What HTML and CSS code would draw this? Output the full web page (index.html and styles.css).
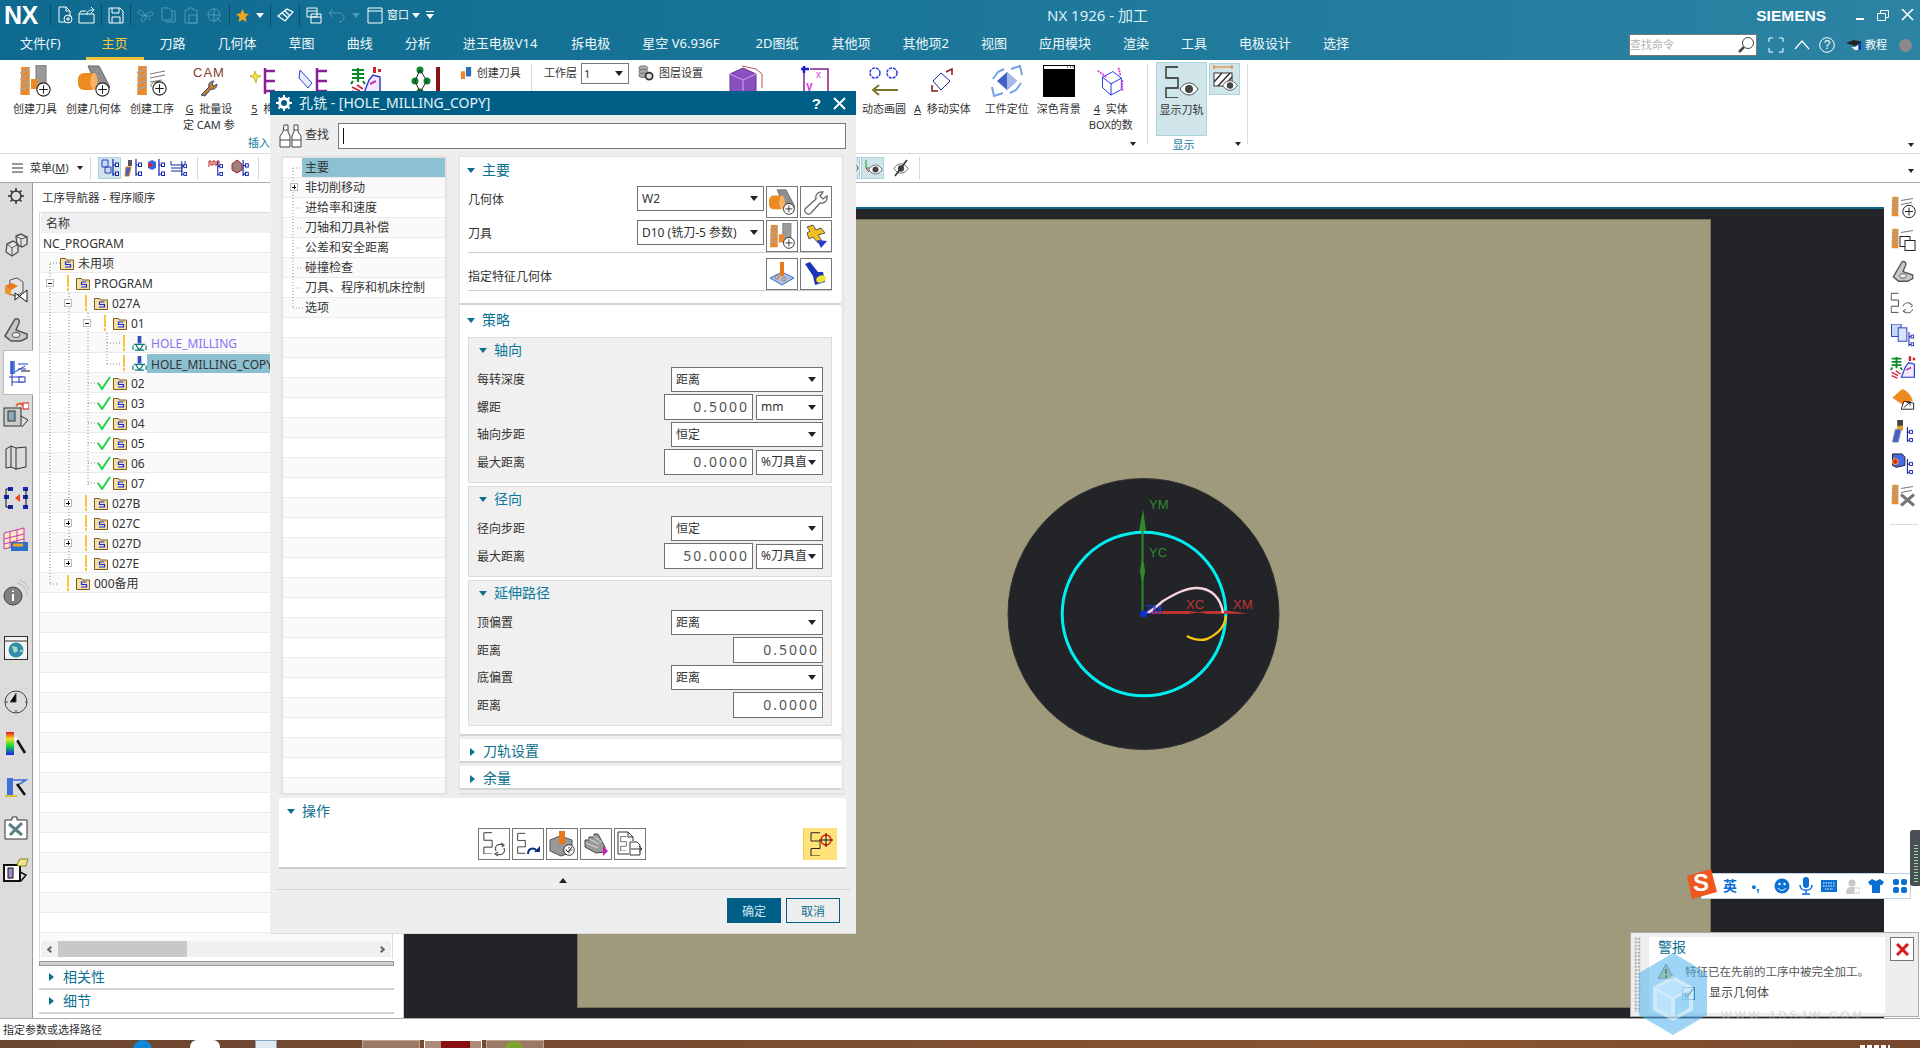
FILE: index.html
```html
<!DOCTYPE html>
<html lang="zh">
<head>
<meta charset="utf-8">
<title>NX 1926 - 加工</title>
<link rel="stylesheet" href="styles.css">
</head>
<body>
<svg class="defs" width="0" height="0">
<defs>
<symbol id="drill" viewBox="0 0 12 30"><path d="M2 0h9v30H1z" fill="#e98a2e"/><path d="M1 7l10-5M1 13l10-5M1 19l10-5M1 25l10-5" stroke="#a9a39a" stroke-width="2"/></symbol>
<symbol id="plus" viewBox="0 0 14 14"><circle cx="7" cy="7" r="6.2" fill="#fff" stroke="#222"/><path d="M7 3v8M3 7h8" stroke="#222"/></symbol>
<symbol id="c-tool" viewBox="0 0 32 32"><use href="#drill" x="0" y="2" width="12" height="28"/><path d="M17 0h10v22H17z" fill="#9a9a9a" stroke="#777"/><path d="M12 14h7v10h-7z" fill="#e98a2e"/><use href="#plus" x="17" y="17" width="15" height="15"/></symbol>
<symbol id="c-geom" viewBox="0 0 32 32"><path d="M10 1h11l11 21-9 9z" fill="#8f8f8f" stroke="#666"/><rect x="0" y="8" width="19" height="17" rx="6" fill="#ee8a22"/><ellipse cx="16" cy="16.500" rx="3.500" ry="8.500" fill="#f7b266"/><use href="#plus" x="17" y="17" width="15" height="15"/></symbol>
<symbol id="c-oper" viewBox="0 0 32 32"><use href="#drill" x="0" y="1" width="12" height="29"/><path d="M14 9l15-3M14 13l15-3M14 17l12-2M16 22c-3-2 0-5 8-6" stroke="#777" fill="none"/><use href="#plus" x="16" y="16" width="15" height="15"/></symbol>
<symbol id="cam" viewBox="0 0 32 32"><text x="0" y="12" class="svg-cam">CAM</text><path d="M8 30l8-8c-1-3 1-6 5-6l-2 3 2 2 3-2c0 4-3 6-6 5l-6 7z" fill="#c67d20" stroke="#234d9c"/></symbol>
<symbol id="star-e" viewBox="0 0 28 28"><path d="M6 4l1.500 4L12 9l-4 2-1 5-2-5-4-2 4-1z" fill="#f5e34a" stroke="#c8b830"/><path d="M16 1v26M16 4h10M16 14h10M16 24h10" stroke="#8c1f9c" stroke-width="2.500" fill="none"/></symbol>
<symbol id="hand-e" viewBox="0 0 30 28"><path d="M2 3l12 13-4 5-9-10z" fill="#e8eefc" stroke="#2b3fd0"/><path d="M19 1v26M19 4h10M19 14h10M19 24h10" stroke="#8c1f9c" stroke-width="2.500" fill="none"/></symbol>
<symbol id="green-hand" viewBox="0 0 32 28"><path d="M2 3h12M2 7h12M2 11h12M8 1v14M3 14l-2 3M13 14l2 3" stroke="#0a8a2a" stroke-width="2.200"/><path d="M23 0h3v6h-3zM28 2h3v3h-3z" fill="#cc2233"/><path d="M14 26l5-13 4-5 7 2v16z" fill="#f3e8ff" stroke="#2233cc" stroke-width="1.400"/><path d="M20 17l6-3" stroke="#c23ab0" stroke-width="2"/><path d="M2 20l8 4M2 24l7 3M7 18l6 4" stroke="#d02040" stroke-width="1.800"/></symbol>
<symbol id="chain" viewBox="0 0 30 28"><g fill="#0b8a2c"><circle cx="4" cy="14" r="3.500"/><circle cx="9" cy="3" r="3.500"/><circle cx="9" cy="25" r="3.500"/><circle cx="16" cy="14" r="3.500"/></g><path d="M4 14l5-11 7 11-7 11z" stroke="#222" fill="none"/><rect x="25" y="0" width="4" height="28" fill="#8a1414"/></symbol>
<symbol id="layer-gear" viewBox="0 0 18 18"><g fill="#aaa" stroke="#666"><ellipse cx="6" cy="3.500" rx="5" ry="2.500"/><ellipse cx="6" cy="7.500" rx="5" ry="2.500"/><ellipse cx="6" cy="11.500" rx="5" ry="2.500"/></g><circle cx="12.500" cy="12.500" r="4" fill="#ddd" stroke="#333" stroke-width="2"/></symbol>
<symbol id="small-tool" viewBox="0 0 14 14"><path d="M1 5h5v9H1z" fill="#e98a2e"/><path d="M7 0h6v11H7z" fill="#2d6bb8"/></symbol>
<symbol id="cube" viewBox="0 0 34 32"><path d="M1 9l13-6 13 6v20H1z" fill="#8b4fc0" stroke="#6a2f9c"/><path d="M1 9l13 6 13-6M14 15v16" stroke="#c9a8ea" fill="none"/><path d="M13 1l14 3 6 5v14" stroke="#b55" fill="none"/></symbol>
<symbol id="frame-y" viewBox="0 0 30 30"><path d="M4 4v24M10 3h18v23" stroke="#861e8e" stroke-width="1.500" fill="none"/><path d="M1 3h8M4 0v7" stroke="#1e1ec8" stroke-width="2.500"/><text x="6" y="24" class="svg-y">y</text><text x="16" y="12" class="svg-x">x</text></symbol>
<symbol id="circles-arrow" viewBox="0 0 30 30"><circle cx="6" cy="7" r="5" fill="none" stroke="#2b3fe0" stroke-dasharray="3 1" stroke-width="1.500"/><circle cx="23" cy="7" r="5" fill="none" stroke="#2b3fe0" stroke-dasharray="3 1" stroke-width="1.500"/><path d="M29 24H6" stroke="#78782a" stroke-width="2"/><path d="M10 19l-6 5 6 5" fill="none" stroke="#78782a" stroke-width="2"/></symbol>
<symbol id="move" viewBox="0 0 28 28"><path d="M13 6l9 8-9 9-8-9z" fill="#fff" stroke="#1a2a9c"/><path d="M18 5l6-3v6M10 24H4v-6" fill="none" stroke="#8a1a1a" stroke-width="1.500"/></symbol>
<symbol id="locate" viewBox="0 0 32 32"><path d="M16 7l10 9-10 9-10-9z" fill="#3f62c4"/><path d="M16 7l10 9-10 9z" fill="#aab9e8"/><path d="M20 4l9-3 2 9M12 28l-9 3-2-9M2 14l5-7 6-3M30 18l-5 7-6 3" fill="none" stroke="#78a2e8" stroke-width="2"/></symbol>
<symbol id="darkbg" viewBox="0 0 32 32"><rect width="32" height="32" fill="#000"/><rect x="1" y="1" width="30" height="3" fill="#fff"/><path d="M24 2h1M27 2h1M29.500 2h1" stroke="#000"/></symbol>
<symbol id="box-wire" viewBox="0 0 34 34"><path d="M8 13l11-6 9 7v12l-11 6-9-8z" fill="#fff" stroke="#1a2aee"/><path d="M8 13l9 7 11-6M17 20v12" stroke="#1a2aee" fill="none"/><path d="M3 6l9 7M25 3l2 8M29 16v11" stroke="#e23ad8" stroke-width="2" stroke-dasharray="2 1" fill="none"/></symbol>
<symbol id="path" viewBox="0 0 14 32"><path d="M13 1H1v11h12v10H1v10h12" fill="none" stroke="#222" stroke-width="1.300"/></symbol>
<symbol id="eye" viewBox="0 0 20 14"><path d="M1 7c5-8 13-8 18 0-5 8-13 8-18 0z" fill="#fff" stroke="#444"/><circle cx="10" cy="7" r="4" fill="#444"/></symbol>
<symbol id="hatch-eye" viewBox="0 0 26 30"><path d="M1 3h20M2 1v4M20 1v4" stroke="#e8781a"/><rect x="2" y="9" width="18" height="13" fill="#fff" stroke="#333"/><path d="M2 18l8-9M6 22l12-13M12 22l8-9" stroke="#333" stroke-width="1.500"/><use href="#eye" x="10" y="15" width="16" height="13"/></symbol>
<symbol id="tree-r" viewBox="0 0 8 18"><path d="M2 0v17M2 6h4M2 15h4" stroke="#12a" stroke-width="1.200"/><rect x="4.500" y="4" width="3" height="3.500" fill="#fff" stroke="#12a"/><rect x="4.500" y="13" width="3" height="3.500" fill="#fff" stroke="#12a"/></symbol>
<symbol id="mini-tree" viewBox="0 0 18 18"><path d="M1 1h6v7H1zM4 8h6v6H4z" fill="#c8d8f4" stroke="#2a3ac0"/><use href="#tree-r" x="10" y="0" width="8" height="18"/></symbol>
<symbol id="tb-tool" viewBox="0 0 18 18"><path d="M4 1h4v6H4z" fill="#555"/><path d="M2 8h5l-2 9H1z" fill="#3f62c4" stroke="#e8781a"/><use href="#tree-r" x="10" y="0" width="8" height="18"/></symbol>
<symbol id="tb-box" viewBox="0 0 18 18"><path d="M1 3l4-2 4 2v6l-4 2-4-2z" fill="#3f62d8"/><circle cx="3" cy="6" r="2" fill="#e02020"/><use href="#tree-r" x="10" y="0" width="8" height="18"/></symbol>
<symbol id="tb-lines" viewBox="0 0 18 18"><path d="M1 2v4h14V2M1 9h12M1 12h12" stroke="#1a2a9c" fill="none"/><use href="#tree-r" x="10" y="2" width="7" height="16"/></symbol>
<symbol id="tb-red" viewBox="0 0 18 18"><path d="M1 8V2h2v4h2V2h2v4h2V2h2v6" stroke="#c01818" fill="none"/><use href="#tree-r" x="8" y="2" width="7" height="16"/></symbol>
<symbol id="tb-gear" viewBox="0 0 18 18"><path d="M1 5l5-4 5 4v6l-5 3-5-3z" fill="#a0807a" stroke="#a02030"/><use href="#tree-r" x="10" y="1" width="8" height="17"/></symbol>
<symbol id="folder" viewBox="0 0 14 14"><path d="M.5 2.500h5l1 1.500h7v9.500H.5z" fill="#f3e1a6" stroke="#7f5a18"/><path d="M10.500 6H5.500v2.500h5V11H5" fill="none" stroke="#1a2ee0" stroke-width="1.200"/></symbol>
<symbol id="check" viewBox="0 0 14 14"><path d="M1 7l4 6 8-12" fill="none" stroke="#22d04a" stroke-width="2"/></symbol>
<symbol id="hole-op" viewBox="0 0 16 16"><rect x="6" y="0" width="4" height="8" fill="#3a4fc0"/><path d="M2 9h12M1 10v5M15 10v5M4 9l3 5h2l3-5M3 15h10" stroke="#137a7a" fill="none" stroke-width="1.300"/></symbol>
<symbol id="gear" viewBox="0 0 16 16"><circle cx="8" cy="8" r="4.500" fill="none" stroke="currentColor" stroke-width="3"/><path d="M8 0v3M8 13v3M0 8h3M13 8h3M2.500 2.500l2 2M11.500 11.500l2 2M2.500 13.500l2-2M11.500 4.500l2-2" stroke="currentColor" stroke-width="2"/></symbol>
<symbol id="gear-thin" viewBox="0 0 16 16"><circle cx="8" cy="8" r="5" fill="none" stroke="currentColor" stroke-width="1.500"/><path d="M8 0v3M8 13v3M0 8h3M13 8h3M2.500 2.500l2 2M11.500 11.500l2 2M2.500 13.500l2-2M11.500 4.500l2-2" stroke="currentColor" stroke-width="1.500"/></symbol>
<symbol id="bino" viewBox="0 0 24 24"><path d="M5 1h4v7l2 4v11H1V12l3-4zM15 1h4v7l3 4v11H13V12l2-4z" fill="#fff" stroke="#444"/><path d="M1 16h10M13 16h9M5 6h4M15 6h4" stroke="#444"/></symbol>
<symbol id="wrench" viewBox="0 0 26 26"><path d="M3 24c-2-2-2-3 0-5l10-9c-1-4 2-8 7-7l-3 4 3 3 4-3c1 5-3 8-7 7l-9 10c-2 2-3 2-5 0z" fill="#fff" stroke="#666" stroke-width="1.300"/></symbol>
<symbol id="tools-color" viewBox="0 0 26 26"><path d="M4 4l6-2 3 5 5-2 4 5-7 2 4 6-4 2-5-6-4 2-2-6 3-2z" fill="#f0c020" stroke="#555"/><path d="M14 17l10 1-6 7z" fill="#2a3ad0"/></symbol>
<symbol id="feature" viewBox="0 0 26 26"><path d="M1 17l12-6 12 6-12 7z" fill="#a8c4ee" stroke="#3c6cc0"/><rect x="11" y="1" width="4" height="14" fill="#e8781a"/><circle cx="8" cy="16" r="2" fill="none" stroke="#c67030"/><circle cx="15" cy="18" r="2" fill="none" stroke="#c67030"/></symbol>
<symbol id="torch" viewBox="0 0 26 26"><path d="M2 3l5-2 8 10 5 0 2 10-10 3-2-9z" fill="#1f35b8"/><ellipse cx="18" cy="18" rx="5" ry="3.500" fill="#f2e32c" transform="rotate(-20 18 18)"/></symbol>
<symbol id="op-gen" viewBox="0 0 26 26"><use href="#path" x="2" y="1" width="10" height="22"/><path d="M15 20c-2-5 2-8 7-6M23 17c2 5-3 8-7 6M20 12l3 2-2 2M17 21l-3 2 3 2" fill="none" stroke="#555" stroke-width="1.200"/></symbol>
<symbol id="op-replay" viewBox="0 0 26 26"><use href="#path" x="2" y="1" width="9" height="22"/><path d="M13 23c0-6 6-7 9-3" fill="none" stroke="#103080" stroke-width="2"/><path d="M19 21h6v-6z" fill="#103080"/></symbol>
<symbol id="op-verify" viewBox="0 0 26 26"><path d="M1 9l10-4 12 4v12l-11 4-11-5z" fill="#999" stroke="#555"/><path d="M10 0h6v13h-6z" fill="#e8781a"/><use href="#plus" x="14" y="13" width="12" height="12"/><path d="M17 19l2 2 4-5" stroke="#222" fill="#fff"/></symbol>
<symbol id="op-stairs" viewBox="0 0 26 26"><path d="M2 9h4V6h5V3h4l7 13v5l-9 1-11-6z" fill="#9a9a9a" stroke="#444"/><path d="M3 12l12 5M6 8l10 5M10 5l9 6" stroke="#ddd"/><path d="M20 15l5 5-5 5z" fill="#c81eb8"/></symbol>
<symbol id="op-list" viewBox="0 0 26 26"><path d="M1 1h10l5 5v4M1 1v22h11M11 1v5h5" fill="none" stroke="#333"/><use href="#path" x="3" y="5" width="7" height="15"/><path d="M13 11h7l3 3v10H13zM14 18h10M22 15l3 3-3 3" fill="#fff" stroke="#333"/></symbol>
<symbol id="op-target" viewBox="0 0 30 30"><use href="#path" x="4" y="3" width="11" height="24"/><circle cx="20" cy="11" r="5" fill="none" stroke="#e01010" stroke-width="1.300"/><path d="M13 11h14M20 4v14" stroke="#111"/></symbol>
<symbol id="r-block" viewBox="0 0 24 24"><path d="M12 3l5-2 6 3v7l-5 3-5-2zM3 11l6-3 5 3v8l-6 4-6-4z" fill="#e4e4e4" stroke="#555" stroke-width="1.400"/><path d="M3 11l5 4 6-4M8 15v8M12 3l5 3 6-2M17 6v7" fill="none" stroke="#555"/></symbol>
<symbol id="r-orange" viewBox="0 0 26 26"><path d="M7 3l7-2 6 4v10l-7 4-7-2z" fill="#e4e4e4" stroke="#555"/><path d="M2 9l7-3 6 3-7 4z" fill="#e8781a"/><path d="M2 9l6 4v6l-6-3z" fill="#f09230"/><path d="M12 16l12 9V13L12 23z" fill="#fff" stroke="#111"/></symbol>
<symbol id="r-bracket" viewBox="0 0 26 26"><path d="M2 19L12 2c3-1 5 1 4 4l-3 7 11 4v4l-6 3H8z" fill="#c8c8c8" stroke="#555" stroke-width="1.500"/><ellipse cx="13" cy="18" rx="4" ry="2.500" fill="#eee" stroke="#555"/></symbol>
<symbol id="r-nav" viewBox="0 0 22 26"><rect x="2" y="1" width="5" height="13" fill="#5d7fd8"/><path d="M4 1v25M1 17h14M10 4h10M10 9h8M7 12l10-6" stroke="#1a3ac0" fill="none"/><path d="M4 22h12" stroke="#1a3ac0"/><rect x="11" y="17" width="6" height="5" fill="#fff" stroke="#1a3ac0"/><path d="M13 11h9" stroke="#111"/></symbol>
<symbol id="r-machine" viewBox="0 0 26 26"><rect x="1" y="6" width="17" height="18" fill="#ccc" stroke="#333"/><rect x="5" y="9" width="7" height="10" fill="#8ab" stroke="#333"/><path d="M18 14l7 4-6 7" stroke="#333" fill="none"/><path d="M13 4c2-3 5-3 7-1" stroke="#e06020" fill="none" stroke-width="2"/><rect x="20" y="1" width="6" height="6" fill="#fff" stroke="#e01010"/></symbol>
<symbol id="r-books" viewBox="0 0 24 26"><path d="M2 5l5-3 5 2 10-1v20l-10 2-5-2-5 1z" fill="none" stroke="#333"/><path d="M12 4v23M7 2v21" stroke="#333"/></symbol>
<symbol id="r-nodes" viewBox="0 0 26 26"><g fill="#1428c4"><rect x="1" y="10" width="5" height="4"/><rect x="5" y="2" width="5" height="4"/><rect x="5" y="20" width="5" height="4"/><rect x="20" y="2" width="5" height="4"/><rect x="20" y="10" width="5" height="4"/><rect x="20" y="20" width="5" height="4"/></g><path d="M3 12V4h5M3 12v10h5M23 4v18" stroke="#111" fill="none"/><path d="M12 13l5-4v8z" fill="#e8481a"/></symbol>
<symbol id="r-grid" viewBox="0 0 26 26"><path d="M1 6l20-5v16L1 22z" fill="#ffe9c4" stroke="#c23ab0"/><path d="M1 12l20-5M1 17l20-5M7 5v16M14 3v16" stroke="#c23ab0"/><path d="M8 15h17v9H8z" fill="#2a70c8"/><path d="M10 18h10" stroke="#f5a820" stroke-width="3"/></symbol>
<symbol id="r-info" viewBox="0 0 26 26"><circle cx="10" cy="16" r="9" fill="#808080" stroke="#444"/><path d="M10 14v7M10 10.500v1.500" stroke="#fff" stroke-width="2"/><path d="M14 3c5 1 9 5 10 11M16 0c6 2 9 6 10 10" stroke="#bbb" fill="none"/></symbol>
<symbol id="r-globe" viewBox="0 0 24 24"><rect x=".5" y=".5" width="23" height="23" fill="#f4f4f4" stroke="#333"/><path d="M1 5h22" stroke="#333"/><circle cx="12" cy="14" r="7.500" fill="#2f8fa8"/><path d="M8 10l5 1 1 4-4 2zM15 16l3-3 1 3z" fill="#a8d8c0"/></symbol>
<symbol id="r-clock" viewBox="0 0 24 24"><circle cx="12" cy="12" r="11" fill="none" stroke="#444"/><path d="M12 3v9H6M12 20v3M1 12h3M21 12h2" stroke="#444"/></symbol>
<symbol id="r-rainbow" viewBox="0 0 24 24"><defs><linearGradient id="rb" x1="0" y1="0" x2="0" y2="1"><stop offset="0" stop-color="#e8181a"/><stop offset=".3" stop-color="#f0e020"/><stop offset=".6" stop-color="#18d838"/><stop offset="1" stop-color="#1820e8"/></linearGradient></defs><rect x="2" y="0" width="8" height="23" fill="url(#rb)"/><path d="M13 8l8 13" stroke="#111" stroke-width="2.500"/><path d="M12 4l1 2 2 1-2 1-1 2-1-2-2-1 2-1z" fill="#fff"/></symbol>
<symbol id="r-wand" viewBox="0 0 24 24"><path d="M3 3h6v17H3z" fill="#3f6fd8"/><path d="M9 5h13l-8 5" fill="none" stroke="#3f6fd8" stroke-width="1.500"/><path d="M1 21h12" stroke="#d8c030" stroke-width="2"/><path d="M13 9l8 11" stroke="#111" stroke-width="2.500"/></symbol>
<symbol id="r-toolsbox" viewBox="0 0 24 24"><path d="M1 4h7V1h5v3h10v19H1z" fill="#fff" stroke="#333"/><path d="M5 8l13 11M18 7L6 19" stroke="#5f8080" stroke-width="3"/></symbol>
<symbol id="r-machfolder" viewBox="0 0 26 26"><rect x="1" y="8" width="16" height="16" fill="#fff" stroke="#111" stroke-width="2"/><rect x="5" y="11" width="5" height="10" fill="#a8c" stroke="#111"/><path d="M17 15l6 3-5 6" stroke="#111" fill="none" stroke-width="1.500"/><path d="M14 7l3-5h8l-2 7h-8z" fill="#f3e08a" stroke="#7a8a20"/></symbol>
<symbol id="rs-new" viewBox="0 0 26 22"><use href="#drill" x="0" y="0" width="10" height="20"/><path d="M11 4l12-2M11 8l11-2" stroke="#777"/><use href="#plus" x="12" y="8" width="14" height="14"/></symbol>
<symbol id="rs-copy" viewBox="0 0 26 22"><use href="#drill" x="0" y="0" width="10" height="20"/><path d="M11 4l12-2" stroke="#777"/><rect x="10" y="8" width="10" height="10" fill="#fff" stroke="#222"/><rect x="15" y="12" width="10" height="10" fill="#fff" stroke="#222"/></symbol>
<symbol id="rs-path" viewBox="0 0 26 24"><use href="#path" x="0" y="0" width="9" height="22"/><path d="M13 15c1-4 6-5 9-2M23 18c-1 4-6 5-9 2M20 12l3 2-2 2M16 18l-3 2 3 2" fill="none" stroke="#555"/></symbol>
<symbol id="rs-sheets" viewBox="0 0 26 24"><rect x="1" y="0" width="10" height="13" fill="#c8d8f4" stroke="#2a3ac0"/><rect x="8" y="4" width="9" height="14" fill="#d8e4f8" stroke="#2a3ac0"/><use href="#tree-r" x="17" y="8" width="8" height="16"/></symbol>
<symbol id="rs-orange" viewBox="0 0 26 26"><path d="M1 11L12 1c6 2 10 7 12 13l-10 6z" fill="#ee8a1e"/><path d="M11 24l3-9 11 2v7z" fill="#fff" stroke="#111"/><path d="M14 22l7-6M21 16v4M21 16h-4" stroke="#111"/></symbol>
<symbol id="rs-tool" viewBox="0 0 26 24"><path d="M7 0h6v8H7z" fill="#444"/><rect x="7" y="6" width="6" height="5" fill="#e8a020"/><path d="M5 10h6l-3 13H2z" fill="#3f62c4" stroke="#88a"/><use href="#tree-r" x="15" y="7" width="9" height="17"/></symbol>
<symbol id="rs-box" viewBox="0 0 26 24"><path d="M2 2h10l3 3v9l-9 2-4-2z" fill="#4a68e0" stroke="#223"/><circle cx="5" cy="10" r="3" fill="#e02020" stroke="#f0d020"/><use href="#tree-r" x="15" y="7" width="9" height="17"/></symbol>
<symbol id="rs-del" viewBox="0 0 26 22"><use href="#drill" x="0" y="0" width="10" height="20"/><path d="M11 4l12-2M11 8l11-2" stroke="#777"/><path d="M11 10l13 11M24 10L11 21" stroke="#777" stroke-width="3"/></symbol>
</defs>
</svg>

<div class="app">
  <header class="chrome">
    <div class="titlerow">
      <span class="nx">NX</span>
      <div class="qa">
        <i class="qsep"></i>
        <span class="slot"><svg width="16" height="18" viewBox="0 0 16 18"><path d="M2 1h7l4 4v6M2 1v15h6M9 1v4h4" fill="none" stroke="#fff"/><circle cx="11" cy="13" r="4" fill="none" stroke="#fff"/><path d="M11 11v4M9 13h4" stroke="#fff"/></svg></span>
        <span class="slot"><svg width="18" height="17" viewBox="0 0 18 17"><path d="M1 7h15v9H1zM1 7l2-3h5" fill="none" stroke="#fff"/><path d="M9 8c0-4 2-5 6-5M13 0l3 3-3 3" fill="none" stroke="#fff"/></svg></span>
        <i class="qsep"></i>
        <span class="slot"><svg width="16" height="17" viewBox="0 0 16 17"><path d="M1 1h11l3 3v12H1zM4 1v5h7V1M4 16v-6h8v6" fill="none" stroke="#fff"/></svg></span>
        <i class="qsep"></i>
        <span class="slot s23 dim"><svg width="17" height="16" viewBox="0 0 17 16"><path d="M8 8C5 2 1 3 1 5s4 4 7 3zM8 8c6-5 8-3 8-1s-4 3-8 1zM8 8c-4 2-4 7-2 7s3-3 2-7zM8 8c2 3 5 5 6 4" fill="none" stroke="#4f9ab8"/></svg></span>
        <span class="slot s23 dim"><svg width="15" height="16" viewBox="0 0 15 16"><path d="M1 1h7l3 3v9H1zM11 4h3v11H5v-2" fill="none" stroke="#4f9ab8"/></svg></span>
        <span class="slot s23 dim"><svg width="15" height="17" viewBox="0 0 15 17"><path d="M1 3h4V1h4v2h4v13H1z" fill="none" stroke="#4f9ab8"/><path d="M5 8h8v8H5z" fill="none" stroke="#4f9ab8"/></svg></span>
        <span class="slot s23 dim"><svg width="15" height="16" viewBox="0 0 15 16"><circle cx="7" cy="8" r="6" fill="none" stroke="#4f9ab8"/><path d="M7 1v14M1 8h12M9 10l5 5" fill="none" stroke="#4f9ab8"/></svg></span>
        <i class="qsep"></i>
        <span class="slot star-slot"><svg width="13" height="13" viewBox="0 0 13 13"><path d="M6.500 0l2 4.500 4.500.5-3.500 3 1 5-4-2.500L2.500 13l1-5L0 5l4.500-.5z" fill="#f2a81e"/></svg></span>
        <span class="arrow-slot"><i class="caret white"></i></span>
        <i class="qsep"></i>
        <span class="slot"><svg width="17" height="14" viewBox="0 0 17 14"><path d="M1 8l9-7 6 3-8 9zM5 5l6 5M8 3l5 5" fill="none" stroke="#fff" stroke-width="1.300"/></svg></span>
        <i class="qsep"></i>
        <span class="slot"><svg width="16" height="17" viewBox="0 0 16 17"><path d="M1 1h10v9H1zM1 4h10M5 7h10v9H5zM5 10h10" fill="#0f6b90" stroke="#fff"/></svg></span>
        <span class="slot dim"><svg width="17" height="15" viewBox="0 0 17 15"><path d="M1 5h10c4 0 5 3 5 5s-2 4-5 4M5 1L1 5l4 4" fill="none" stroke="#4f9ab8"/></svg></span>
        <span class="arrow-slot wide"><i class="caret dimc"></i></span>
        <span class="slot s20"><svg width="16" height="17" viewBox="0 0 16 17"><path d="M1 1h14v15H1z" fill="none" stroke="#fff"/><path d="M1 4h14" stroke="#fff"/></svg></span>
        <span class="win-text">窗口</span>
        <span class="arrow-slot"><i class="caret white"></i></span>
        <span class="arrow-slot"><i class="caret white lined"></i></span>
      </div>
      <span class="apptitle">NX 1926 - 加工</span>
      <span class="siemens">SIEMENS</span>
      <div class="winbtns">
        <svg width="10" height="12" viewBox="0 0 10 12"><path d="M1 10h8" stroke="#fff" stroke-width="2"/></svg>
        <svg width="12" height="12" viewBox="0 0 12 12"><path d="M.5 4.500h8v7h-8zM3.500 4V1.500h8v7H9" fill="none" stroke="#fff"/></svg>
        <svg width="13" height="12" viewBox="0 0 13 12"><path d="M1 0l11 11M12 0L1 11" stroke="#fff" stroke-width="1.600"/></svg>
      </div>
    </div>
    <nav class="tabs">
      <span class="tab t-first">文件(F)</span>
      <span class="tab active">主页</span>
      <span class="tab">刀路</span>
      <span class="tab">几何体</span>
      <span class="tab">草图</span>
      <span class="tab">曲线</span>
      <span class="tab">分析</span>
      <span class="tab t-jin">进玉电极V14</span>
      <span class="tab">拆电极</span>
      <span class="tab t-star">星空 V6.936F</span>
      <span class="tab t-2d">2D图纸</span>
      <span class="tab">其他项</span>
      <span class="tab">其他项2</span>
      <span class="tab">视图</span>
      <span class="tab">应用模块</span>
      <span class="tab">渲染</span>
      <span class="tab">工具</span>
      <span class="tab">电极设计</span>
      <span class="tab">选择</span>
      <div class="tabtools">
        <div class="cmdsearch"><span>查找命令</span>
          <svg width="18" height="18" viewBox="0 0 18 18"><circle cx="11" cy="7" r="5.500" fill="#fff" stroke="#444"/><path d="M7 11l-5 5" stroke="#444" stroke-width="2.500"/></svg>
        </div>
        <svg class="tt fs" width="16" height="16" viewBox="0 0 16 16"><path d="M1 5V1h4M11 1h4v4M15 11v4h-4M5 15H1v-4" fill="none" stroke="#fff"/></svg>
        <svg class="tt ch" width="16" height="10" viewBox="0 0 16 10"><path d="M1 9l7-8 7 8" fill="none" stroke="#fff" stroke-width="1.200"/></svg>
        <svg class="tt qm" width="16" height="16" viewBox="0 0 16 16"><circle cx="8" cy="8" r="7.300" fill="none" stroke="#fff"/><text x="8" y="12" class="svg-q">?</text></svg>
        <svg class="tt hat" width="16" height="12" viewBox="0 0 16 12"><path d="M0 4l8-3 8 2-7 4z" fill="#222"/><path d="M3 6c3 3 6 3 9 0v5H9z" fill="#fff"/><path d="M14 4v7" stroke="#1a2ae0" stroke-width="2"/></svg>
        <span class="tut">教程</span>
        <i class="usercirc"></i>
      </div>
    </nav>
  </header>

  <section class="ribbon">
    <div class="rgroup g-insert">
      <div class="ritems">
        <div class="ritem"><svg width="32" height="32"><use href="#c-tool"/></svg><span>创建刀具</span></div>
        <div class="ritem"><svg width="32" height="32"><use href="#c-geom"/></svg><span>创建几何体</span></div>
        <div class="ritem"><svg width="32" height="32"><use href="#c-oper"/></svg><span>创建工序</span></div>
        <div class="ritem"><svg width="32" height="32"><use href="#cam"/></svg><span><u>G</u> &nbsp;批量设<br>定 CAM 参</span></div>
        <div class="ritem w40"><svg width="28" height="28"><use href="#star-e"/></svg><span><u>5</u> &nbsp;构</span></div>
        <div class="ritem w45"><svg width="30" height="28"><use href="#hand-e"/></svg></div>
        <div class="ritem w52"><svg width="32" height="28"><use href="#green-hand"/></svg></div>
        <div class="ritem w50"><svg width="30" height="28"><use href="#chain"/></svg></div>
        <div class="rmini">
          <div class="rmini-row"><svg width="12" height="12"><use href="#small-tool"/></svg><span>创建刀具</span></div>
        </div>
      </div>
      <div class="rlabel">插入</div>
    </div>
    <i class="rsep"></i>
    <div class="rgroup g-layer">
      <div class="ritems">
        <div class="rlayer"><span>工作层</span><div class="rsel"><span>1</span><i class="caret"></i></div></div>
        <div class="rmini"><div class="rmini-row"><svg width="16" height="16"><use href="#layer-gear"/></svg><span>图层设置</span></div></div>
        <div class="ritem w34 mcube"><svg width="34" height="32"><use href="#cube"/></svg></div>
        <div class="ritem w30 mframe"><svg width="30" height="30"><use href="#frame-y"/></svg></div>
        <div class="ritem mdyn"><svg width="30" height="30"><use href="#circles-arrow"/></svg><span>动态画圆</span></div>
        <div class="ritem mm"><svg width="28" height="28"><use href="#move"/></svg><span><u>A</u> &nbsp;移动实体</span></div>
        <div class="ritem mm3"><svg width="32" height="32"><use href="#locate"/></svg><span>工件定位</span></div>
        <div class="ritem mm2"><svg width="32" height="32"><use href="#darkbg"/></svg><span>深色背景</span></div>
        <div class="ritem mm"><svg width="34" height="33"><use href="#box-wire"/></svg><span><u>4</u> &nbsp;实体<br>BOX的数</span></div>
      </div>
      <i class="caret tiny endcaret"></i>
    </div>
    <i class="rsep s2"></i>
    <div class="rgroup g-show">
      <div class="ritems">
        <div class="ritem show-on"><svg width="34" height="32" viewBox="0 0 34 32"><use href="#path" width="14" height="32"/><use href="#eye" x="14" y="16" width="20" height="14"/></svg><span>显示刀轨</span></div>
        <div class="show-small"><svg width="26" height="30"><use href="#hatch-eye"/></svg></div>
      </div>
      <div class="rlabel">显示</div>
      <i class="caret tiny endcaret c2"></i>
    </div>
    <i class="rsep s3"></i>
    <i class="caret tiny farcaret"></i>
  </section>

  <section class="toolbar">
    <svg class="burger" width="11" height="10" viewBox="0 0 11 10"><path d="M0 1h11M0 5h11M0 9h11" stroke="#333"/></svg>
    <span class="menu-t">菜单(<u>M</u>)</span>
    <i class="caret tiny menu-c"></i>
    <i class="tsep"></i>
    <span class="tbtn on"><svg width="18" height="18"><use href="#mini-tree"/></svg></span>
    <span class="tbtn"><svg width="18" height="18"><use href="#tb-tool"/></svg></span>
    <span class="tbtn"><svg width="18" height="18"><use href="#tb-box"/></svg></span>
    <span class="tbtn"><svg width="18" height="18"><use href="#tb-lines"/></svg></span>
    <i class="tsep"></i>
    <span class="tbtn"><svg width="18" height="18"><use href="#tb-red"/></svg></span>
    <span class="tbtn"><svg width="18" height="18"><use href="#tb-gear"/></svg></span>
    <i class="tsep"></i>
    <span class="tbtn on hide-eye"><svg width="20" height="14"><use href="#eye"/></svg></span>
    <span class="tbtn on eye2"><svg width="20" height="16" viewBox="0 0 20 16"><path d="M3 0v8h8" stroke="#1a9a2a" fill="none"/><path d="M3 8l3 4" stroke="#d01a1a"/><use href="#eye" x="5" y="4" width="15" height="11"/></svg></span>
    <span class="tbtn eye3"><svg width="18" height="18" viewBox="0 0 18 18"><use href="#eye" x="1" y="4" width="16" height="11"/><path d="M3 17L15 1" stroke="#333" stroke-width="1.500"/></svg></span>
    <i class="tsep"></i>
    <i class="caret tiny farcaret f2"></i>
  </section>

  <main class="main">
    <aside class="rail">
      <span class="rslot"><svg class="railgear" width="16" height="16"><use href="#gear-thin"/></svg></span>
      <span class="rslot"><svg width="24" height="24"><use href="#r-block"/></svg></span>
      <span class="rslot"><svg width="26" height="26"><use href="#r-orange"/></svg></span>
      <span class="rslot"><svg width="26" height="26"><use href="#r-bracket"/></svg></span>
      <span class="rslot on"><svg width="22" height="26"><use href="#r-nav"/></svg></span>
      <span class="rslot"><svg width="26" height="26"><use href="#r-machine"/></svg></span>
      <span class="rslot"><svg width="24" height="26"><use href="#r-books"/></svg></span>
      <span class="rslot"><svg width="26" height="26"><use href="#r-nodes"/></svg></span>
      <span class="rslot"><svg width="26" height="26"><use href="#r-grid"/></svg></span>
      <span class="rslot"><svg width="26" height="26"><use href="#r-info"/></svg></span>
      <span class="rslot"><svg width="24" height="24"><use href="#r-globe"/></svg></span>
      <span class="rslot"><svg width="24" height="24"><use href="#r-clock"/></svg></span>
      <span class="rslot"><svg width="24" height="24"><use href="#r-rainbow"/></svg></span>
      <span class="rslot"><svg width="24" height="24"><use href="#r-wand"/></svg></span>
      <span class="rslot"><svg width="24" height="24"><use href="#r-toolsbox"/></svg></span>
      <span class="rslot"><svg width="26" height="26"><use href="#r-machfolder"/></svg></span>
    </aside>

    <section class="nav">
      <h2 class="navtitle">工序导航器 - 程序顺序</h2>
      <div class="navtable">
        <div class="navhead">名称</div>
        <div class="tree">
          <svg class="dots" width="240" height="400" viewBox="39 233 240 400">
            <path d="M49 264V584M49 263H59M49 584H58M68 293V564M87 313V485M87 383H98M87 403H98M87 423H98M87 443H98M87 463H98M87 483H98M106 333V364M106 343H120M106 364H120" fill="none" stroke="#888" stroke-dasharray="1 2"/>
          </svg>
          <div class="trow root"><span>NC_PROGRAM</span></div>
          <div class="trow l0b"><svg class="fd" width="14" height="14"><use href="#folder"/></svg><span>未用项</span></div>
          <div class="trow l0"><i class="tog minus"></i><i class="bang"></i><svg class="fd" width="14" height="14"><use href="#folder"/></svg><span>PROGRAM</span></div>
          <div class="trow l1"><i class="tog minus"></i><i class="bang"></i><svg class="fd" width="14" height="14"><use href="#folder"/></svg><span>027A</span></div>
          <div class="trow l2"><i class="tog minus"></i><i class="bang"></i><svg class="fd" width="14" height="14"><use href="#folder"/></svg><span>01</span></div>
          <div class="trow l3"><i class="tog none"></i><i class="bang"></i><svg class="op" width="15" height="15"><use href="#hole-op"/></svg><span class="purple">HOLE_MILLING</span></div>
          <div class="trow l3"><i class="tog none"></i><i class="bang"></i><svg class="op" width="15" height="15"><use href="#hole-op"/></svg><span class="picked">HOLE_MILLING_COPY</span></div>
          <div class="trow l2"><i class="tog none"></i><svg class="chk" width="14" height="14"><use href="#check"/></svg><svg class="fd" width="14" height="14"><use href="#folder"/></svg><span>02</span></div>
          <div class="trow l2"><i class="tog none"></i><svg class="chk" width="14" height="14"><use href="#check"/></svg><svg class="fd" width="14" height="14"><use href="#folder"/></svg><span>03</span></div>
          <div class="trow l2"><i class="tog none"></i><svg class="chk" width="14" height="14"><use href="#check"/></svg><svg class="fd" width="14" height="14"><use href="#folder"/></svg><span>04</span></div>
          <div class="trow l2"><i class="tog none"></i><svg class="chk" width="14" height="14"><use href="#check"/></svg><svg class="fd" width="14" height="14"><use href="#folder"/></svg><span>05</span></div>
          <div class="trow l2"><i class="tog none"></i><svg class="chk" width="14" height="14"><use href="#check"/></svg><svg class="fd" width="14" height="14"><use href="#folder"/></svg><span>06</span></div>
          <div class="trow l2"><i class="tog none"></i><svg class="chk" width="14" height="14"><use href="#check"/></svg><svg class="fd" width="14" height="14"><use href="#folder"/></svg><span>07</span></div>
          <div class="trow l1"><i class="tog plus"></i><i class="bang"></i><svg class="fd" width="14" height="14"><use href="#folder"/></svg><span>027B</span></div>
          <div class="trow l1"><i class="tog plus"></i><i class="bang"></i><svg class="fd" width="14" height="14"><use href="#folder"/></svg><span>027C</span></div>
          <div class="trow l1"><i class="tog plus"></i><i class="bang"></i><svg class="fd" width="14" height="14"><use href="#folder"/></svg><span>027D</span></div>
          <div class="trow l1"><i class="tog plus"></i><i class="bang"></i><svg class="fd" width="14" height="14"><use href="#folder"/></svg><span>027E</span></div>
          <div class="trow l0"><i class="tog none"></i><i class="bang"></i><svg class="fd" width="14" height="14"><use href="#folder"/></svg><span>000备用</span></div>
        </div>
        <div class="hscroll"><i class="sarrow left"></i><i class="thumb"></i><i class="sarrow right"></i></div>
      </div>
      <div class="splitbar"></div>
      <div class="fold"><i class="tri-r"></i><span>相关性</span></div>
      <div class="fold"><i class="tri-r"></i><span>细节</span></div>
    </section>

    <section class="viewwrap">
      <div class="viewport">
        <div class="khaki">
          <svg class="scene" width="300" height="300" viewBox="994 463 300 300">
            <circle cx="1143.500" cy="613" r="135.500" fill="#232428" stroke="#333" />
            <circle cx="1144" cy="613" r="81.800" fill="none" stroke="#00eef0" stroke-width="3"/>
            <path d="M1143 508l3 22-2.500 0 0 30 1.500 10-1.500 10v33h-2v-33l-1.500-10 1.500-10v-30l-2.500 0z" fill="#2f8a2f"/>
            <path d="M1148 613h40l10-1.500 10 1.500h18l22-.5-22-3v.5h-18l-10 1-10-1h-40z" fill="#c03434"/>
            <path d="M1147 612c6-3 10-7 16-12 10-6 22-13 34-13 14 0 24 10 26 25" fill="none" stroke="#f6d7df" stroke-width="2.400"/>
            <path d="M1226 615c-1 10-8 18-19 23-7 2-13 1-20-3" fill="none" stroke="#fdc40f" stroke-width="2.400"/>
            <circle cx="1143.500" cy="613" r="3.500" fill="#1030c8"/>
            <text x="1149" y="508" class="ax ax-g">YM</text>
            <text x="1149" y="556" class="ax ax-g">YC</text>
            <text x="1186" y="608" class="ax ax-r">XC</text>
            <text x="1233" y="608" class="ax ax-r">XM</text>
            <text x="1145" y="613" class="ax ax-b">ZM</text>
          </svg>
        </div>
      </div>
    </section>

    <aside class="rightbar">
      <svg width="26" height="22"><use href="#rs-new"/></svg>
      <svg width="26" height="22"><use href="#rs-copy"/></svg>
      <svg width="26" height="24"><use href="#r-bracket"/></svg>
      <svg width="26" height="24"><use href="#rs-path"/></svg>
      <svg width="26" height="24"><use href="#rs-sheets"/></svg>
      <svg width="26" height="26"><use href="#green-hand"/></svg>
      <svg width="26" height="26"><use href="#rs-orange"/></svg>
      <svg width="26" height="24"><use href="#rs-tool"/></svg>
      <svg width="26" height="24"><use href="#rs-box"/></svg>
      <svg width="26" height="22"><use href="#rs-del"/></svg>
      <i class="rb-line"></i>
    </aside>
  </main>

  <footer class="status">指定参数或选择路径</footer>
  <div class="taskbar">
    <i class="tk circle"></i><i class="tk pill"></i><i class="tk boxy"></i>
    <i class="tk tile t1"></i><i class="tk tile t2"><b></b></i><i class="tk tile t3"><b></b></i>
    <i class="clockbits"></i>
  </div>
</div>

<section class="dialog">
  <div class="dtitle">
    <svg class="dgear" width="16" height="16"><use href="#gear"/></svg>
    <span>孔铣 - [HOLE_MILLING_COPY]</span>
    <b class="dq">?</b>
    <svg width="13" height="13" viewBox="0 0 13 13"><path d="M1 1l11 11M12 1L1 12" stroke="#fff" stroke-width="1.800"/></svg>
  </div>
  <div class="dsearch">
    <svg width="24" height="24"><use href="#bino"/></svg>
    <span>查找</span>
    <div class="dinput"><i></i></div>
  </div>
  <div class="dbody">
    <div class="dlist">
      <svg class="ldots" width="20" height="160" viewBox="0 0 20 160"><path d="M10 10V150M10 10H20M14 50H20M14 70H20M14 90H20M14 110H20M14 130H20M10 150H20" fill="none" stroke="#999" stroke-dasharray="1 2"/></svg>
      <div class="lrow sel-row">主要</div>
      <div class="lrow"><i class="tog plus ltog"></i>非切削移动</div>
      <div class="lrow">进给率和速度</div>
      <div class="lrow">刀轴和刀具补偿</div>
      <div class="lrow">公差和安全距离</div>
      <div class="lrow">碰撞检查</div>
      <div class="lrow">刀具、程序和机床控制</div>
      <div class="lrow">选项</div>
    </div>
    <div class="dpanel">
      <div class="sec s-main">
        <div class="sech"><i class="tri-d"></i>主要</div>
        <div class="frow">
          <label>几何体</label>
          <div class="sel mid"><span>W2</span><i class="caret"></i></div>
          <span class="ibtn"><svg width="26" height="26"><use href="#c-geom"/></svg></span>
          <span class="ibtn"><svg width="26" height="26"><use href="#wrench"/></svg></span>
        </div>
        <div class="frow">
          <label>刀具</label>
          <div class="sel mid"><span>D10 (铣刀-5 参数)</span><i class="caret"></i></div>
          <span class="ibtn"><svg width="26" height="26"><use href="#c-tool"/></svg></span>
          <span class="ibtn"><svg width="26" height="26"><use href="#tools-color"/></svg></span>
        </div>
        <div class="frow lined">
          <label class="low">指定特征几何体</label>
          <span class="ibtn auto"><svg width="26" height="26"><use href="#feature"/></svg></span>
          <span class="ibtn"><svg width="26" height="26"><use href="#torch"/></svg></span>
        </div>
      </div>
      <div class="sec s-strat">
        <div class="sech tall"><i class="tri-d"></i>策略</div>
        <div class="grp">
          <div class="grph"><i class="tri-d"></i>轴向</div>
          <div class="crow"><label>每转深度</label><div class="sel"><span>距离</span><i class="caret"></i></div></div>
          <div class="crow"><label>螺距</label><div class="num">0.5000</div><div class="sel unit"><span>mm</span><i class="caret"></i></div></div>
          <div class="crow"><label>轴向步距</label><div class="sel"><span>恒定</span><i class="caret"></i></div></div>
          <div class="crow"><label>最大距离</label><div class="num">0.0000</div><div class="sel unit"><span>%刀具直径</span><i class="caret"></i></div></div>
        </div>
        <div class="grp">
          <div class="grph"><i class="tri-d"></i>径向</div>
          <div class="crow"><label>径向步距</label><div class="sel"><span>恒定</span><i class="caret"></i></div></div>
          <div class="crow"><label>最大距离</label><div class="num">50.0000</div><div class="sel unit"><span>%刀具直径</span><i class="caret"></i></div></div>
        </div>
        <div class="grp">
          <div class="grph"><i class="tri-d"></i>延伸路径</div>
          <div class="crow"><label>顶偏置</label><div class="sel"><span>距离</span><i class="caret"></i></div></div>
          <div class="crow"><label>距离</label><div class="num wide">0.5000</div></div>
          <div class="crow"><label>底偏置</label><div class="sel"><span>距离</span><i class="caret"></i></div></div>
          <div class="crow"><label>距离</label><div class="num wide">0.0000</div></div>
        </div>
      </div>
      <div class="sec s-fold"><i class="tri-r"></i>刀轨设置</div>
      <div class="sec s-fold"><i class="tri-r"></i>余量</div>
    </div>
  </div>
  <div class="dops">
    <div class="sech"><i class="tri-d"></i>操作</div>
    <div class="opsrow">
      <span class="ibtn"><svg width="26" height="26"><use href="#op-gen"/></svg></span>
      <span class="ibtn"><svg width="26" height="26"><use href="#op-replay"/></svg></span>
      <span class="ibtn"><svg width="26" height="26"><use href="#op-verify"/></svg></span>
      <span class="ibtn"><svg width="26" height="26"><use href="#op-stairs"/></svg></span>
      <span class="ibtn"><svg width="26" height="26"><use href="#op-list"/></svg></span>
      <span class="yellowbtn"><svg width="30" height="30"><use href="#op-target"/></svg></span>
    </div>
  </div>
  <div class="dcollapse"><i></i></div>
  <div class="dfoot">
    <button class="ok">确定</button>
    <button class="cancel">取消</button>
  </div>
</section>

<div class="ime">
  <svg class="ime-s" width="32" height="30" viewBox="0 0 32 30"><path d="M2 7L26 0l6 23L7 30z" fill="#f0561e"/><text x="16" y="22" class="svg-s">S</text></svg>
  <div class="ime-bar">
    <b>英</b>
    <span class="punct">•,</span>
    <svg width="16" height="16" viewBox="0 0 16 16"><circle cx="8" cy="8" r="7.500" fill="#0b6fd6"/><circle cx="5.500" cy="6" r="1.200" fill="#fff"/><circle cx="10.500" cy="6" r="1.200" fill="#fff"/><path d="M4 10c2 3 6 3 8 0" stroke="#fff" fill="none"/></svg>
    <svg width="14" height="18" viewBox="0 0 14 18"><rect x="4" y="0" width="6" height="11" rx="3" fill="#0b6fd6"/><path d="M1 8c0 7 12 7 12 0M7 13v4M3 17h8" stroke="#0b6fd6" fill="none" stroke-width="1.500"/></svg>
    <svg width="16" height="12" viewBox="0 0 16 12"><rect width="16" height="12" fill="#0b6fd6"/><path d="M2 3h12M2 6h12M4 9h8" stroke="#fff" stroke-dasharray="1.500 1"/></svg>
    <svg width="14" height="15" viewBox="0 0 14 15"><circle cx="6" cy="4" r="3.500" fill="#c8c8c8"/><path d="M0 15c0-6 2-7 6-7h2v7z" fill="#c8c8c8"/><rect x="8" y="9" width="6" height="5" fill="#fff" stroke="#c8c8c8"/></svg>
    <svg width="16" height="14" viewBox="0 0 16 14"><path d="M4 0l4 2 4-2 4 3-2 3h-2v8H4V6H2L0 3z" fill="#0b6fd6"/></svg>
    <svg width="14" height="14" viewBox="0 0 14 14"><g fill="#0b6fd6"><rect width="6" height="6" rx="2"/><rect x="8" width="6" height="6" rx="2"/><rect y="8" width="6" height="6" rx="2"/><rect x="8" y="8" width="6" height="6" rx="2"/></g></svg>
  </div>
</div>
<div class="meter"><i></i></div>

<section class="alert">
  <div class="grip"></div>
  <div class="alert-body">
    <div class="alert-h">警报</div>
    <div class="alert-msg">
      <svg width="16" height="15" viewBox="0 0 16 15"><path d="M8 0l8 15H0z" fill="#d8d27a" stroke="#888"/><path d="M8 5v5M8 11.500v2" stroke="#333" stroke-width="1.500"/></svg>
      <span>特征已在先前的工序中被完全加工。</span>
    </div>
    <div class="alert-chk"><i class="cbox"><svg width="11" height="10" viewBox="0 0 11 10"><path d="M1 5l3 4 6-8" stroke="#111" stroke-width="2" fill="none"/></svg></i><span>显示几何体</span></div>
  </div>
  <div class="alert-x"><svg width="13" height="13" viewBox="0 0 13 13"><path d="M1 1l11 11M12 1L1 12" stroke="#d81818" stroke-width="3"/></svg></div>
</section>

<div class="wm">
  <svg width="72" height="84" viewBox="0 0 72 84"><path d="M36 1l34 20v42L36 83 2 63V21z" fill="#4fb0ec" opacity=".55"/><path d="M36 24l20 11v23L36 69 16 58V35z" fill="#fff" opacity=".5"/><path d="M36 28l16 8-16 9-16-9zM20 39l14 8v17l-14-8z" fill="#a8dcfb" opacity=".5"/><path d="M38 47l14-8v17l-14 8z" fill="#6cc0f0" opacity=".5"/></svg>
  <span>WWW.3DSJW.COM</span>
</div>
</body>
</html>
```

FILE: styles.css
```css
* { box-sizing: border-box; }
html, body { margin: 0; padding: 0; height: 100%; overflow: hidden; }
body {
  width: 1920px; height: 1048px; position: relative; background: #fff; color: #333;
  font: 12px/1.2 "Noto Sans", "Noto Sans CJK SC", sans-serif;
}
i { display: block; font-style: normal; }
.defs { position: absolute; }
svg { display: block; flex: none; }
.svg-cam { font: 13px "Liberation Sans", sans-serif; fill: #8a3a2c; letter-spacing: 1px; }
.svg-y { font: bold 12px "Liberation Sans", sans-serif; fill: #e23ad8; }
.svg-x { font: 10px "Liberation Sans", sans-serif; fill: #e23ad8; }
.svg-q { font: 12px "Liberation Sans", sans-serif; fill: #fff; text-anchor: middle; }
.svg-s { font: bold 24px "Liberation Sans", sans-serif; fill: #fff; text-anchor: middle; }

.app { display: flex; flex-direction: column; width: 1920px; height: 1048px; }

.caret { width: 0; height: 0; border: 4px solid transparent; border-top: 5px solid #222; border-bottom: 0; }
.caret.white { border-top-color: #fff; }
.caret.dimc { border-top-color: #4f9ab8; }
.caret.lined { position: relative; margin-top: 3px; }
.caret.lined::before { content: ""; position: absolute; top: -8px; left: -4px; width: 8px; height: 1px; background: #fff; }
.caret.tiny { border-width: 3px; border-top-width: 4px; border-bottom: 0; }

/* chrome */
.chrome { background: linear-gradient(90deg, #0e6a8f, #1a7698 45%, #2c83a4); color: #e8f4f8; height: 60px; flex: none; }
.titlerow { height: 30px; display: flex; align-items: center; padding-left: 4px; }
.nx { width: 37px; font: bold 25px/1 "Liberation Sans", sans-serif; color: #fff; letter-spacing: -.5px; }
.qa { display: flex; align-items: center; margin-left: 6px; }
.qsep { width: 1px; height: 22px; background: #0a4f6c; margin: 0 3px; }
.slot { width: 22px; display: flex; justify-content: center; }
.s23 { width: 23px; }
.s20 { width: 20px; }
.star-slot { margin-left: -2px; }
.arrow-slot { width: 14px; display: flex; justify-content: center; }
.arrow-slot.wide { width: 18px; }
.win-text { font-size: 11px; color: #fff; margin: 0 1px 0 2px; width: 21px; white-space: nowrap; }
.apptitle { margin-left: 610px; font-size: 15px; color: #dcf0f6; white-space: nowrap; }
.siemens { margin-left: auto; font: bold 15.500px/1 "Liberation Sans", sans-serif; color: #fff; padding-top: 1px; }
.winbtns { display: flex; align-items: center; gap: 12px; margin-left: 29px; padding-right: 6px; }

.tabs { height: 30px; display: flex; align-items: stretch; padding-left: 4px; font-size: 13px; }
.tab { padding: 0 16px; display: flex; align-items: center; border-bottom: 3px solid transparent; white-space: nowrap; padding-top: 1px; color: #eef8fb; }
.t-first { margin-right: 9px; }
.t-jin { margin-right: 2px; }
.t-star { margin-right: 4px; }
.t-2d { margin-right: 1px; }
.tab.active { color: #f7c740; border-bottom-color: #f5c33b; }
.tabtools { margin-left: auto; display: flex; align-items: center; padding-right: 8px; }
.cmdsearch { width: 128px; height: 22px; background: #fff; border: 1px solid #777; display: flex; align-items: center; justify-content: space-between; color: #b4b4b4; font-size: 11px; padding-right: 1px; }
.tt { margin-left: 11px; }
.tt.ch { margin-left: 10px; }
.tt.qm { margin-left: 9px; }
.tt.hat { margin-left: 11px; }
.tut { font-size: 11px; margin-left: 3px; color: #fff; width: 24px; white-space: nowrap; }
.usercirc { width: 13px; height: 13px; border-radius: 50%; background: #8a8a8a; margin-left: 10px; }

/* ribbon */
.ribbon { height: 94px; flex: none; background: #fff; border-bottom: 1px solid #d8d8d8; display: flex; padding-left: 13px; position: relative; font-size: 11px; color: #333; }
.rgroup { position: relative; height: 84px; margin-top: 4px; display: flex; flex-direction: column; }
.ritems { display: flex; height: 72px; flex: none; }
.rlabel { text-align: center; color: #0b7a9c; font-size: 11px; line-height: 14px; }
.g-insert { width: 510px; }
.g-insert .rlabel { padding-right: 18px; }
.g-insert .ritems { gap: 9px; }
.ritem { display: flex; flex-direction: column; align-items: center; text-align: center; white-space: nowrap; line-height: 16px; }
.ritem > svg { height: 32px; margin-bottom: 4px; margin-top: 1px; }
.ritem span { display: block; }
.ritem u, .menu-t u { text-decoration: underline; }
.w40 { width: 40px; margin-left: -1px; }
.w45 { width: 42px; }
.w52 { width: 46px; }
.w50 { width: 46px; margin-left: 5px; }
.rmini { margin-left: 2px; }
.rmini-row { display: flex; align-items: center; gap: 5px; height: 16px; margin-top: 1px; white-space: nowrap; font-size: 11px; }
.rsep { width: 1px; height: 80px; background: #d8d8d8; margin: 4px 0 0 8px; flex: none; }
.g-layer { margin-left: 12px; width: 600px; }
.rlayer { display: flex; align-items: flex-start; gap: 4px; white-space: nowrap; line-height: 18px; }
.rsel { width: 48px; height: 21px; border: 1px solid #777; margin-top: -1px; display: flex; align-items: center; justify-content: space-between; padding: 0 5px 0 2px; }
.g-layer .rmini { margin-left: 9px; }
.mcube { margin-left: 26px; width: 34px; }
.mframe { margin-left: 37px; width: 30px; }
.mdyn { margin-left: 32px; }
.mm { margin-left: 8px; }
.mm2 { margin-left: 8px; }
.mm3 { margin-left: 14px; }
.endcaret { position: absolute; right: 8px; bottom: 2px; }
.rsep.s2 { margin-left: 3px; }
.g-show { margin-left: 8px; width: 91px; }
.show-on { width: 51px; height: 74px; margin-top: -2px; background: #cfe5ea; border: 1px solid #a9d3dd; padding-top: 2px; }
.show-small { width: 31px; height: 32px; margin: -1px 0 0 2px; background: #cfe5ea; border: 1px solid #a9d3dd; display: flex; align-items: center; justify-content: center; }
.c2 { right: 6px; }
.g-show .rlabel { padding-right: 36px; margin-top: 2px; }
.rsep.s3 { margin-left: 0; }
.farcaret { position: absolute; right: 6px; bottom: 6px; }

/* toolbar */
.toolbar { height: 29px; flex: none; display: flex; align-items: center; border-bottom: 1px solid #aaa; background: #fff; position: relative; font-size: 11px; padding-left: 12px; }
.menu-t { margin-left: 7px; width: 42px; white-space: nowrap; }
.menu-c { margin-left: 5px; }
.tsep { width: 1px; height: 22px; background: #d8d8d8; margin: 0 7px; }
.toolbar > .tsep:nth-of-type(1) { margin: 0 9px; }
.tbtn { width: 23px; height: 22px; display: flex; align-items: center; justify-content: center; }
.tbtn.on { background: #cfe5ea; border: 1px solid #a9d3dd; }
.hide-eye { margin-left: 571px; }
.eye2 { margin-left: 1px; }
.eye3 { margin-left: 5px; }
.farcaret.f2 { bottom: 9px; }

/* main */
.main { flex: 1; min-height: 0; display: flex; background: #fff; }
.rail { width: 33px; flex: none; background: #dcdcdc; border-right: 1px solid #9a9a9a; display: flex; flex-direction: column; }
.rslot { height: 42px; display: flex; align-items: center; justify-content: center; flex: none; }
.railgear { color: #333; }
.rslot:nth-child(1) { height: 26px; }
.rslot:nth-child(2) { margin-top: 15px; }
.rslot:nth-child(3) { margin-top: 3px; }
.rslot:nth-child(4) { margin-top: -2px; }
.rslot:nth-child(5) { margin-left: 3px; margin-right: -1px; height: 45px; margin-top: -1px; margin-bottom: -2px; background: #fff; border: 1px solid #bbb; border-right: 0; }
.rslot:nth-child(6) { margin-top: 1px; }
.rslot:nth-child(8) { margin-top: -1px; }
.rslot:nth-child(10) { margin-top: 11px; }
.rslot:nth-child(11) { margin-top: 13px; }
.rslot:nth-child(12) { margin-top: 12px; }
.rslot:nth-child(14) { margin-top: 1px; }
.rslot:nth-child(15) { margin-top: -1px; }

.nav { width: 371px; flex: none; background: #fff; border-right: 1px solid #ccc; padding: 0 10px 0 6px; display: flex; flex-direction: column; }
.navtitle { margin: 0; height: 29px; line-height: 30px; padding-left: 3px; font-size: 11.500px; font-weight: 400; color: #333; }
.navtable { flex: none; height: 747px; border: 1px solid #ddd; border-bottom: 0; margin-top: 0; display: flex; flex-direction: column; }
.navhead { height: 20px; background: #f0f0f0; line-height: 22px; padding-left: 5px; font-size: 12px; flex: none; border-left: 1px solid #fff; }
.tree { position: relative; height: 708px; flex: none; overflow: hidden;
  background: repeating-linear-gradient(180deg, #fff 0, #fff 19px, #ebebeb 19px, #ebebeb 20px, #fafafa 20px, #fafafa 39px, #ebebeb 39px, #ebebeb 40px); }
.dots { position: absolute; left: 0; top: 0; }
.trow { position: relative; height: 20px; display: flex; align-items: center; white-space: nowrap; font-size: 12px; color: #333; }
.trow > span { padding-top: 2px; }
.root { padding-left: 3px; }
.l0b { padding-left: 20px; }
.l0 { padding-left: 6px; }
.l1 { padding-left: 24px; }
.l2 { padding-left: 43px; }
.l3 { padding-left: 62px; }
.tog { width: 8px; height: 8px; margin-right: 13px; flex: none; position: relative; }
.tog.minus, .tog.plus { background: #fff; border: 1px solid #bbb; }
.tog.minus::before, .tog.plus::before { content: ""; position: absolute; left: 1px; top: 2.500px; width: 4px; height: 1px; background: #111; }
.tog.plus::after { content: ""; position: absolute; left: 2.500px; top: 1px; width: 1px; height: 4px; background: #111; }
.bang { width: 2px; height: 16px; margin-right: 7px; background: linear-gradient(180deg, #fcc63c 0, #fcc63c 72%, transparent 72%, transparent 84%, #fcc63c 84%); flex: none; }
.chk { margin: 0 2px 0 -7px; }
.fd { margin-right: 4px; }
.op { margin-right: 4px; }
.purple { color: #8a70f5; }
.trow > .picked { background: #8bc0d1; display: block; width: 260px; height: 19px; line-height: 19px; padding: 1px 0 0 4px; margin-left: -4px; }
.hscroll { height: 16px; background: #f0f0f0; display: flex; align-items: center; position: relative; flex: none; margin: 0 1px; }
.sarrow { width: 5px; height: 5px; border-left: 2px solid #666; border-bottom: 2px solid #666; transform: rotate(45deg); margin-left: 7px; }
.sarrow.right { transform: rotate(225deg); margin-left: auto; margin-right: 7px; }
.thumb { width: 129px; height: 16px; background: #c8c8c8; margin-left: 5px; }
.splitbar { height: 5px; background: #d0d0d0; border: 1px solid #999; margin-top: 2px; flex: none; width: 355px; }
.fold { height: 24px; border-bottom: 2px solid #d0d0d0; display: flex; align-items: center; color: #0b6f8f; font-size: 14px; width: 355px; padding-left: 10px; flex: none; }
.tri-r { width: 0; height: 0; border: 4.500px solid transparent; border-left: 5px solid #0b6f8f; border-right: 0; margin-right: 9px; flex: none; }
.tri-d { width: 0; height: 0; border: 4.500px solid transparent; border-top: 5px solid #0b6f8f; border-bottom: 0; margin: 0 7px 0 1px; flex: none; }
.fold .tri-r { margin-right: 9px; }

.viewwrap { flex: 1; min-width: 0; padding-top: 24px; display: flex; }
.viewport { flex: 1; background: #232428; border-top: 2px solid #0b6a8a; padding: 10px 173px; display: flex; }
.khaki { flex: 1; background: #9f9a7b; border: 1px solid #77745e; display: flex; align-items: center; justify-content: center; }
.ax { font: 13px "Liberation Sans", sans-serif; }
.ax-g { fill: #2f8a2f; }
.ax-r { fill: #c03434; }
.ax-b { fill: #1c3ae8; font-size: 12px; }

.rightbar { width: 36px; flex: none; display: flex; flex-direction: column; align-items: flex-start; padding: 13px 0 0 6px; gap: 9px; }
.rightbar svg { height: 23px; }
.rb-line { width: 28px; height: 1px; background: #d8d8d8; margin-top: 8px; }

.status { height: 22px; flex: none; border-top: 1px solid #aaa; background: #fff; padding-left: 3px; font-size: 11px; line-height: 21px; color: #333; }
.taskbar { height: 8px; flex: none; background: linear-gradient(90deg, #6c4631, #7a4c30 40%, #8a5530 75%, #75482e); display: flex; position: relative; overflow: hidden; }
.tk { position: absolute; top: 0; }
.circle { left: 133px; width: 19px; height: 19px; border-radius: 50%; background: #1289d8; }
.pill { left: 190px; width: 30px; height: 14px; border-radius: 7px; background: #fff; }
.boxy { left: 255px; width: 22px; height: 10px; background: #dfe9f2; border: 1px solid #7fa4c8; }
.tile { width: 58px; height: 8px; background: #9a7a66; border: 1px solid #bba595; border-bottom: 0; }
.t1 { left: 362px; }
.t2 { left: 424px; background: #ab8c78; border-color: #fff; }
.t2 b { display: block; width: 29px; height: 8px; background: #8a0f0f; margin-left: 16px; }
.t3 { left: 486px; }
.t3 b { display: block; width: 18px; height: 16px; border-radius: 50%; background: #7da52e; margin-left: 18px; }
.clockbits { position: absolute; right: 30px; top: 5px; width: 30px; height: 3px; background: repeating-linear-gradient(90deg, #fff 0, #fff 5px, transparent 5px, transparent 7px); }

/* dialog */
.dialog { position: absolute; left: 270px; top: 91px; width: 586px; height: 842px; background: #eee; box-shadow: 0 1px 0 #ddd; display: flex; flex-direction: column; }
.dtitle { height: 24px; background: #005f87; color: #e8f4f8; display: flex; align-items: center; padding: 0 10px 0 6px; flex: none; font-size: 14px; }
.dgear { color: #fff; margin-right: 7px; }
.dtitle span { flex: 1; }
.dq { font: bold 15px "Liberation Sans", sans-serif; color: #fff; margin-right: 12px; }
.dsearch { height: 41px; display: flex; align-items: center; padding-left: 9px; flex: none; font-size: 12px; }
.dsearch span { margin-left: 2px; width: 33px; }
.dinput { width: 508px; height: 26px; background: #fff; border: 1px solid #777; padding: 4px 4px; }
.dinput i { width: 1px; height: 16px; background: #111; }
.dbody { display: flex; gap: 12px; padding-left: 11px; height: 639px; flex: none; }
.dlist { position: relative; width: 166px; border: 2px solid #e2e2e2; border-bottom-width: 2px; padding-top: 0; font-size: 12px;
  background: repeating-linear-gradient(180deg, #fff 0, #fff 19px, #ebebeb 19px, #ebebeb 20px, #fafafa 20px, #fafafa 39px, #ebebeb 39px, #ebebeb 40px); }
.ldots { position: absolute; left: 0; top: 0; }
.lrow { height: 20px; position: relative; padding-left: 22px; line-height: 20px; white-space: nowrap; color: #333; }
.sel-row { background: linear-gradient(#8cc1d2, #8cc1d2) 19px 0 / 100% 19px no-repeat; }
.ltog { position: absolute; left: 7px; top: 5px; margin: 0; }
.dpanel { width: 385px; background: #eee; border: 1px solid #e2e2e2; border-bottom: 2px solid #e2e2e2; padding-right: 2px; display: flex; flex-direction: column; }
.sec { background: #fff; border-bottom: 2px solid #d4d4d4; }
.s-main { height: 148px; padding: 0 9px 0 8px; }
.sech { height: 26px; display: flex; align-items: center; color: #0b6f8f; font-size: 14px; padding-left: 0; }
.frow { display: flex; align-items: flex-start; height: 32px; margin-bottom: 2px; }
.s-main .sech { margin-bottom: 3px; padding-left: 0; margin-left: -2px; }
.frow label { flex: 1; line-height: 28px; font-size: 12px; color: #333; }
.frow label.low { line-height: 38px; }
.frow.lined { border-top: 2px solid #fff; box-shadow: 0 -1px 0 #fff; margin-top: 4px; position: relative; }
.frow.lined::before { content: ""; position: absolute; left: 0; right: 0; top: -6px; height: 1px; background: #ccc; }
.frow.lined::after { content: ""; position: absolute; left: 0; right: 0; top: 32px; height: 1px; background: #ccc; }
.ibtn { width: 32px; height: 32px; border: 1px solid #777; background: #fff; display: flex; align-items: center; justify-content: center; flex: none; margin-left: 2px; }
.ibtn.auto { margin-left: auto; }
.sel { width: 152px; height: 25px; background: #fff; border: 1px solid #707070; display: flex; align-items: center; justify-content: space-between; padding: 0 6px 0 4px; font-size: 12px; flex: none; color: #333; }
.sel span { white-space: nowrap; overflow: hidden; padding-top: 1px; }
.sel .caret { flex: none; margin-left: 2px; }
.sel.mid { width: 127px; padding-right: 5px; }
.sel.unit { width: 67px; margin-left: 3px; }
.s-strat { padding: 0 9px 7px 8px; height: 431px; }
.s-strat .sech { height: 30px; margin-bottom: 2px; margin-left: -2px; }
.grp { background: #f0f0f0; border: 1px solid #ddd; padding: 0 8px 7px 8px; margin-bottom: 3px; }
.grp:last-child { margin-bottom: 0; }
.grph { height: 29px; padding: 0 0 4px 1px; display: flex; align-items: center; color: #0b7a9c; font-size: 14px; }
.crow { display: flex; align-items: center; margin-bottom: 2px; }
.crow:last-child { margin-bottom: 0; }
.crow label { flex: 1; font-size: 12px; color: #333; padding-top: 2px; }
.num { width: 89px; height: 26px; background: #fff; border: 1px solid #707070; text-align: right; padding-right: 3px; font: 14px/24px "Noto Sans", sans-serif; letter-spacing: 2px; color: #555; flex: none; }
.num.wide { width: 90px; }
.s-fold { height: 24px; padding: 3px 0 0 10px; display: flex; align-items: center; color: #0b6f8f; font-size: 14px; }
.s-fold .tri-r { margin-right: 8px; }
.s-fold:nth-child(3) { margin-top: 3px; }
.s-fold:nth-child(4) { margin-top: 3px; }
.dops { margin: 3px 10px 0 9px; height: 71px; background: #fff; border-bottom: 2px solid #ccc; flex: none; }
.dops .sech { padding-left: 7px; height: 27px; }
.opsrow { display: flex; padding: 3px 9px 0 199px; }
.opsrow .ibtn { margin: 0 2px 0 0; }
.yellowbtn { margin-left: auto; width: 34px; height: 32px; background: #ffe27a; border-left: 1px solid #f0d050; display: flex; align-items: center; justify-content: center; }
.dcollapse { height: 21px; padding-top: 3px; border-bottom: 1px solid #d4d4d4; margin: 0 6px 0 5px; flex: none; display: flex; justify-content: center; align-items: center; }
.dcollapse i { width: 0; height: 0; border: 4px solid transparent; border-bottom: 5px solid #222; border-top: 0; margin-left: 1px; }
.dfoot { display: flex; justify-content: flex-end; gap: 5px; padding: 8px 16px 0 0; }
.dfoot button { width: 54px; height: 25px; font: 12px "Noto Sans", "Noto Sans CJK SC", sans-serif; border: 1px solid #005f87; padding: 0; }
.ok { background: #005f87; color: #cfe8f2; }
.cancel { background: #eee; color: #0b6f8f; }

/* IME */
.ime { position: absolute; left: 1685px; top: 869px; width: 226px; height: 31px; }
.ime-s { position: absolute; left: 0; top: 0; z-index: 1; }
.ime-bar { position: absolute; left: 16px; top: 4px; right: 0; height: 26px; background: #fff; border: 1px solid #bcd3ee; display: flex; align-items: center; gap: 8.500px; padding-left: 21px; color: #0b6fd6; }
.ime-bar b { font-size: 14px; width: 18px; }
.punct { font: bold 13px "Liberation Sans", sans-serif; width: 14px; margin-left: 2px; }
.meter { position: absolute; left: 1910px; top: 830px; width: 10px; height: 56px; background: #4a4e55; border-radius: 3px 0 0 3px; padding: 15px 2px 4px 4px; }
.meter i { height: 100%; background: repeating-linear-gradient(180deg, #8edc8a 0, #8edc8a 1px, #4a4e55 1px, #4a4e55 3px); }

/* alert */
.alert { position: absolute; left: 1630px; top: 932px; width: 289px; height: 85px; background: #eee; border: 1px solid #aaa; display: flex; }
.grip { width: 7px; margin: 4px 0 4px 3px; background: radial-gradient(circle, #aaa 1px, transparent 1.500px) 0 0 / 3.500px 3.500px; }
.alert-body { width: 236px; height: 76px; margin: 4px 0 0 8px; background: #fff; padding-left: 9px; position: relative; }
.alert-h { color: #0b6f8f; font-size: 14px; line-height: 20px; }
.alert-msg { display: flex; align-items: center; margin-top: 7px; color: #555; font-size: 11.500px; }
.alert-msg span { margin-left: 11px; white-space: nowrap; }
.alert-chk { display: flex; align-items: center; margin: 7px 0 0 24px; color: #444; font-size: 12px; }
.cbox { width: 13px; height: 13px; border: 1px solid #1a5f8a; display: flex; align-items: center; justify-content: center; margin-right: 14px; }
.alert-x { width: 24px; height: 24px; margin: 4px 0 0 5px; border: 1px solid #777; display: flex; align-items: center; justify-content: center; background: #fff; }

.wm { position: absolute; left: 1637px; top: 952px; width: 280px; height: 84px; pointer-events: none; }
.wm span { position: absolute; left: 84px; top: 57px; color: #bbb; opacity: .55; font: 11px "Liberation Sans", sans-serif; letter-spacing: 3.500px; white-space: nowrap; }
```
